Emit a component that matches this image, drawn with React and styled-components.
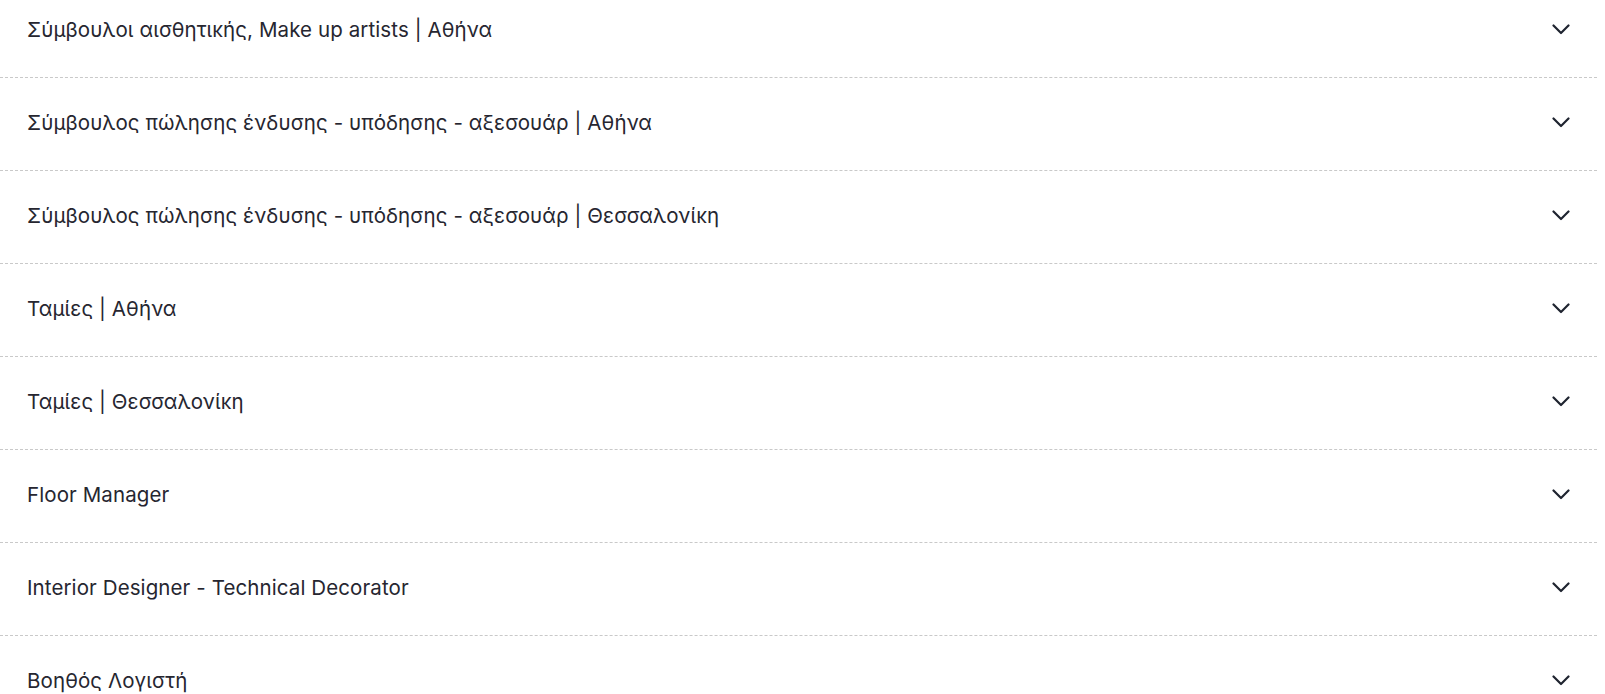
import React from "react";
import styled, { createGlobalStyle } from "styled-components";

const Global = createGlobalStyle`
  html, body { margin: 0; padding: 0; background: #fff; }
  body { font-family: Inter, "Noto Sans", sans-serif; overflow: hidden; }
`;

const List = styled.div`
  width: calc(100% - 8px);
  margin-top: -15px;
`;

const Row = styled.div`
  display: flex;
  align-items: center;
  justify-content: space-between;
  height: 93px;
  box-sizing: border-box;
  padding: 0 27px 4px 27px;
  border-bottom: 1px dashed #c9c9c9;
  cursor: pointer;
`;

const Title = styled.span`
  font-size: 20.5px;
  font-weight: 400;
  letter-spacing: 0.1px;
  color: #262630;
`;

const Chevron = styled.svg`
  width: 18px;
  height: 11px;
  flex: none;
`;

const items = [
  "Σύμβουλοι αισθητικής, Make up artists | Αθήνα",
  "Σύμβουλος πώλησης ένδυσης - υπόδησης - αξεσουάρ | Αθήνα",
  "Σύμβουλος πώλησης ένδυσης - υπόδησης - αξεσουάρ | Θεσσαλονίκη",
  "Ταμίες | Αθήνα",
  "Ταμίες | Θεσσαλονίκη",
  "Floor Manager",
  "Interior Designer - Technical Decorator",
  "Βοηθός Λογιστή",
];

export default function App() {
  return (
    <>
      <Global />
      <List>
        {items.map((t) => (
          <Row key={t}>
            <Title>{t}</Title>
            <Chevron viewBox="0 0 18 11" fill="none">
              <path d="M1.5 1.5 L9 9 L16.5 1.5" stroke="#1f2430" strokeWidth="2.2" strokeLinecap="round" strokeLinejoin="round" />
            </Chevron>
          </Row>
        ))}
      </List>
    </>
  );
}
